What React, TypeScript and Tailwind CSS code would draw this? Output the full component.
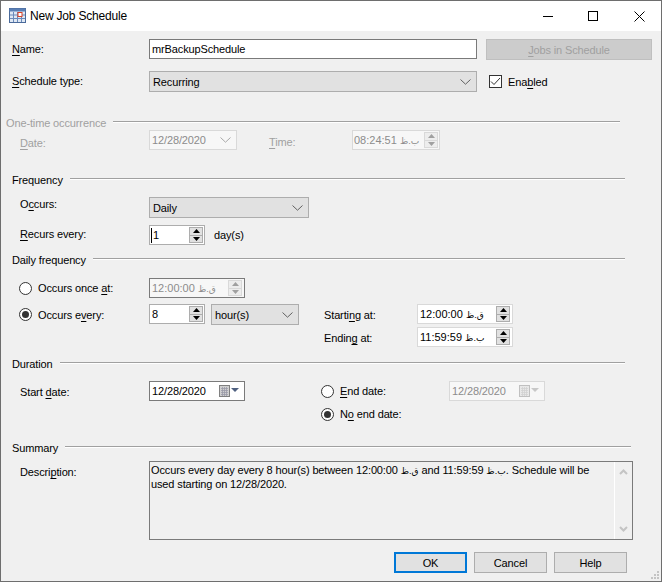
import React from "react";

const Chevron = ({ color = "#606060" }: { color?: string }) => (
  <svg width="11" height="6" viewBox="0 0 11 6" className="shrink-0">
    <path d="M0.5 0.5 L5.5 5.2 L10.5 0.5" fill="none" stroke={color} strokeWidth="1" />
  </svg>
);

const Spin = ({ disabled, w = 14 }: { disabled?: boolean; w?: number }) => {
  const fill = disabled ? "#a0a0a0" : "#000000";
  const bg = disabled ? "bg-[#ededed]" : "bg-[#e1e1e1]";
  const bd = disabled ? "border-[#d9d9d9]" : "border-[#adadad]";
  return (
    <div className="flex flex-col h-[16px] shrink-0" style={{ width: w }}>
      <div className={`flex-1 flex items-center justify-center border ${bd} ${bg}`}>
        <svg width="7" height="4" viewBox="0 0 7 4"><path d="M3.5 0 L7 4 L0 4 Z" fill={fill} /></svg>
      </div>
      <div className={`flex-1 flex items-center justify-center border border-t-0 ${bd} ${bg}`}>
        <svg width="7" height="4" viewBox="0 0 7 4"><path d="M0 0 L7 0 L3.5 4 Z" fill={fill} /></svg>
      </div>
    </div>
  );
};

const Select = ({ text, w }: { text: string; w: string }) => (
  <div className={`${w} h-[21px] bg-[#e1e1e1] border border-[#adadad] flex items-center justify-between pl-[3px] pr-[5px] shrink-0`}>
    <span>{text}</span>
    <Chevron />
  </div>
);

const Radio = ({ on }: { on?: boolean }) => (
  <svg width="13" height="13" viewBox="0 0 13 13" className="shrink-0">
    <circle cx="6.5" cy="6.5" r="6" fill="#ffffff" stroke="#333333" strokeWidth="1" />
    {on && <circle cx="6.5" cy="6.5" r="3.5" fill="#333333" />}
  </svg>
);

const Calendar = ({ disabled }: { disabled?: boolean }) => (
  <svg width="22" height="13" viewBox="0 0 22 13" className="shrink-0">
    <rect x="0.5" y="0.5" width="10" height="11" fill={disabled ? "#e8e8e8" : "#d0d0d0"} stroke={disabled ? "#c0c0c0" : "#808080"} />
    <path d="M2 3.5H9M2 5.5H9M2 7.5H9M2 9.5H9M3.5 2V11M5.5 2V11M7.5 2V11" stroke={disabled ? "#d0d0d0" : "#9a9aa8"} strokeWidth="0.8" />
    <path d="M12 3 L20 3 L16 7 Z" fill={disabled ? "#c8c8c8" : "#4f6080"} />
  </svg>
);

const Section = ({ title, line, mt, disabled }: { title: string; line: string; mt: string; disabled?: boolean }) => (
  <div className={`${mt} h-[14px] flex items-center shrink-0 ${disabled ? "text-[#a0a0a0]" : ""}`}>
    <span className={disabled ? "ml-[-6px]" : ""}>{title}</span>
    <div className={`${line} ml-[7px] flex-1 h-[2px] bg-[#a0a0a0] border-b border-white -mt-[2px]`} />
  </div>
);

const Mn = ({ children }: { children: React.ReactNode }) => (
  <span className="underline underline-offset-[2px]">{children}</span>
);

const Ar = ({ children }: { children: string }) => <bdi className="text-[9px] tracking-normal">{children}</bdi>;
const QF = "ق.ظ";
const BF = "ب.ظ";

const App = () => (
  <div className="relative w-[662px] h-[582px] bg-[#f0f0f0] border border-t-0 border-[#6e6e6e] flex flex-col overflow-hidden text-[11px] leading-[14px] tracking-[-0.13px] text-black font-['Liberation_Sans','DejaVu_Sans',sans-serif]">
    {/* Title bar */}
    <div className="h-[31px] bg-white flex items-center shrink-0 border-t border-[#6e6e6e]">
      <svg width="18" height="16" viewBox="0 0 18 16" className="ml-[8px]">
        <rect x="0.5" y="0.5" width="16" height="14" fill="#dfe8f4" stroke="#4a6a9a" />
        <rect x="0.5" y="0.5" width="16" height="3" fill="#5a7fb5" />
        <path d="M1 7H16M1 10.5H16M4.5 4V14M8.5 4V14M12.5 4V14" stroke="#6a8aba" strokeWidth="1" />
        <rect x="9" y="4.5" width="4" height="4" fill="#ffffff" stroke="#d8432a" />
      </svg>
      <span className="ml-[3px] text-[12px] leading-[16px] tracking-[-0.2px]">New Job Schedule</span>
      <div className="ml-auto flex items-center mr-[16px]">
        <svg width="10" height="1" viewBox="0 0 10 1"><rect width="10" height="1" fill="#000" /></svg>
        <svg width="10" height="10" viewBox="0 0 10 10" className="ml-[35px]"><rect x="0.5" y="0.5" width="9" height="9" fill="none" stroke="#000" /></svg>
        <svg width="11" height="11" viewBox="0 0 11 11" className="ml-[36px]"><path d="M0.5 0.5L10.5 10.5M10.5 0.5L0.5 10.5" stroke="#000" /></svg>
      </div>
    </div>

    <div className="flex flex-col pl-[11px] pr-[9px]">
      {/* Name */}
      <div className="mt-[8px] h-[21px] flex items-center shrink-0">
        <span className="w-[137px] -mt-[1px]"><Mn>N</Mn>ame:</span>
        <div className="w-[328px] h-[20px] mb-px bg-white border border-[#7a7a7a] flex items-center pl-[2px]">mrBackupSchedule</div>
        <div className="ml-[9px] w-[166px] h-[21px] bg-[#cccccc] border border-[#bfbfbf] flex items-center justify-center text-[#a0a0a0]"><span><Mn>J</Mn>obs in Schedule</span></div>
      </div>
      {/* Type */}
      <div className="mt-[11px] h-[21px] flex items-center shrink-0">
        <span className="w-[137px] -mt-[1px]"><Mn>S</Mn>chedule type:</span>
        <Select text="Recurring" w="w-[328px]" />
        <div className="ml-[12px] w-[13px] h-[13px] bg-white border border-[#333333] flex items-center justify-center">
          <svg width="11" height="9" viewBox="0 0 11 9"><path d="M1 4.5L4 7.5L10 1" fill="none" stroke="#333" strokeWidth="1" /></svg>
        </div>
        <span className="ml-[6px]">Ena<Mn>b</Mn>led</span>
      </div>

      <Section title="One-time occurrence" line="mr-[32px]" mt="mt-[24px]" disabled />
      <div className="h-[20px] flex items-center shrink-0 text-[#a0a0a0]">
        <span className="ml-[8px] w-[129px] mt-[6px]"><Mn>D</Mn>ate:</span>
        <div className="w-[88px] h-[20px] bg-[#f7f7f7] border border-[#d9d9d9] flex items-center justify-between pl-[2px] pr-[5px] text-[#8c8c8c]">
          <span>12/28/2020</span>
          <Chevron color="#a8a8a8" />
        </div>
        <span className="ml-[32px] w-[83px] mt-[4px]"><Mn>T</Mn>ime:</span>
        <div className="w-[88px] h-[20px] bg-[#f7f7f7] border border-[#d9d9d9] flex items-center justify-between pl-[1px] pr-px text-[#8c8c8c]">
          <span className="whitespace-nowrap">08:24:51 <Ar>{BF}</Ar></span>
          <Spin disabled />
        </div>
      </div>

      <Section title="Frequency" line="mr-[27px]" mt="mt-[23px]" />
      <div className="mt-[10px] h-[21px] flex items-center shrink-0">
        <span className="ml-[8px] w-[129px] -mt-[8px]">O<Mn>c</Mn>curs:</span>
        <Select text="Daily" w="w-[160px]" />
      </div>
      <div className="mt-[7px] h-[20px] flex items-center shrink-0">
        <span className="ml-[8px] w-[129px] -mt-[2px]"><Mn>R</Mn>ecurs every:</span>
        <div className="w-[56px] h-[20px] bg-white border border-[#adadad] flex items-center justify-between pl-[1px] pr-px">
          <span className="border-l border-black pl-px leading-[15px]">1</span>
          <Spin />
        </div>
        <span className="ml-[9px]">day(s)</span>
      </div>

      <Section title="Daily frequency" line="mr-[27px]" mt="mt-[8px]" />
      <div className="mt-[11px] h-[20px] flex items-center shrink-0">
        <div className="ml-[7px] w-[130px] flex items-center gap-[6px]"><Radio /><span>Occurs once <Mn>a</Mn>t:</span></div>
        <div className="w-[96px] h-[20px] bg-[#f7f7f7] border border-[#7a7a7a] flex items-center justify-between pl-[2px] pr-[2px] text-[#8c8c8c]">
          <span className="whitespace-nowrap">12:00:00 <Ar>{QF}</Ar></span>
          <Spin disabled />
        </div>
      </div>
      <div className="mt-[6px] h-[21px] flex items-center shrink-0">
        <div className="ml-[7px] w-[130px] flex items-center gap-[6px]"><Radio on /><span>Occurs e<Mn>v</Mn>ery:</span></div>
        <div className="w-[56px] h-[20px] mb-px bg-white border border-[#adadad] flex items-center justify-between pl-[1px] pr-px">
          <span className="pl-px">8</span>
          <Spin />
        </div>
        <div className="ml-[6px]"><Select text="hour(s)" w="w-[88px]" /></div>
        <span className="ml-[25px] w-[93px]">Starti<Mn>n</Mn>g at:</span>
        <div className="w-[96px] h-[20px] mb-px bg-white border border-[#d9d9d9] flex items-center justify-between pl-[2px] pr-[2px]">
          <span className="whitespace-nowrap">12:00:00 <Ar>{QF}</Ar></span>
          <Spin />
        </div>
      </div>
      <div className="mt-[2px] h-[20px] flex items-center shrink-0">
        <span className="ml-[312px] w-[93px] mt-[2px]">Endin<Mn>g</Mn> at:</span>
        <div className="w-[96px] h-[20px] bg-white border border-[#d9d9d9] flex items-center justify-between pl-[2px] pr-[2px]">
          <span className="whitespace-nowrap">11:59:59 <Ar>{BF}</Ar></span>
          <Spin />
        </div>
      </div>

      <Section title="Duration" line="mr-[27px]" mt="mt-[10px]" />
      <div className="mt-[10px] h-[20px] flex items-center shrink-0">
        <span className="ml-[8px] w-[129px] mt-[2px]">Start <Mn>d</Mn>ate:</span>
        <div className="w-[96px] h-[20px] bg-white border border-[#7a7a7a] flex items-center justify-between pl-[2px] pr-[3px]">
          <span>12/28/2020</span>
          <Calendar />
        </div>
        <div className="ml-[76px] w-[128px] flex items-center gap-[6px]"><Radio /><span><Mn>E</Mn>nd date:</span></div>
        <div className="w-[96px] h-[20px] bg-[#f7f7f7] border border-[#d9d9d9] flex items-center justify-between pl-[2px] pr-[3px] text-[#8c8c8c]">
          <span>12/28/2020</span>
          <Calendar disabled />
        </div>
      </div>
      <div className="mt-[3px] h-[20px] flex items-center shrink-0">
        <div className="ml-[309px] flex items-center gap-[6px]"><Radio on /><span>N<Mn>o</Mn> end date:</span></div>
      </div>

      <Section title="Summary" line="mr-[21px]" mt="mt-[17px]" />
      <div className="mt-[6px] h-[79px] flex shrink-0">
        <span className="ml-[8px] w-[129px] mt-[4px]">Descri<Mn>p</Mn>tion:</span>
        <div className="w-[484px] h-[79px] border border-[#7a7a7a] flex justify-between">
          <div className="pl-[1px] pt-[2px] w-[465px] leading-[13px]">
            <div className="whitespace-nowrap">Occurs every day every 8 hour(s) between 12:00:00 <Ar>{QF}</Ar> and 11:59:59 <Ar>{BF}</Ar>. Schedule will be</div>
            <div>used starting on 12/28/2020.</div>
          </div>
          <div className="w-[18px] border-l border-[#ffffff] flex flex-col items-center justify-between py-[7px]">
            <svg width="9" height="6" viewBox="0 0 9 6"><path d="M1 5L4.5 1.5L8 5" fill="none" stroke="#c4c4c4" strokeWidth="2" /></svg>
            <svg width="9" height="6" viewBox="0 0 9 6"><path d="M1 1L4.5 4.5L8 1" fill="none" stroke="#c4c4c4" strokeWidth="2" /></svg>
          </div>
        </div>
      </div>
      <div className="mt-[12px] h-[21px] flex items-center shrink-0 ml-[382px] gap-[7px]">
        <div className="w-[73px] h-[21px] bg-[#e1e1e1] border-2 border-[#0078d7] flex items-center justify-center">OK</div>
        <div className="w-[73px] h-[21px] bg-[#e1e1e1] border border-[#adadad] flex items-center justify-center">Cancel</div>
        <div className="w-[73px] h-[21px] bg-[#e1e1e1] border border-[#adadad] flex items-center justify-center">Help</div>
      </div>
    </div>
    <svg width="10" height="10" viewBox="0 0 10 10" className="absolute right-[1px] bottom-[1px]">
      <path d="M7 1h2v2h-2zM4 4h2v2h-2zM7 4h2v2h-2zM1 7h2v2h-2zM4 7h2v2h-2zM7 7h2v2h-2z" fill="#c4c4c4" />
    </svg>
  </div>
);

export default App;
